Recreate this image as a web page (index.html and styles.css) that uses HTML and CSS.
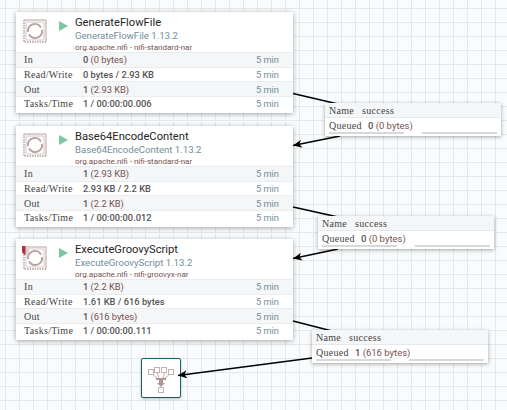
FILE: index.html
```html
<!DOCTYPE html>
<html lang="en">
<head>
    <meta charset="UTF-8" />
    <title>NiFi flow</title>
    <link rel="stylesheet" href="styles.css">
</head>
<body>
<div class="canvas">
    <div class="proc proc-1">
        <div class="proc-head">
            <svg class="proc-icon" width="24" height="24" viewBox="0 0 24 24">
                <path class="stamp" d="M1 1 H23 V23"/>
                <path class="stamp-dots" d="M1 1 V23 H23"/>
                <path class="stamp-inner" d="M3 3 H21 V21 H3 Z"/>
                <path class="swirl" d="M5 13 A7 7 0 0 1 18 8.500"/>
                <path class="swirl" d="M19 11 A7 7 0 0 1 6 15.500"/>
            </svg>
            <span class="run-icon"></span>
            <div class="proc-names">
                <div class="proc-name">GenerateFlowFile</div>
                <div class="proc-type">GenerateFlowFile 1.13.2</div>
                <div class="proc-bundle">org.apache.nifi - nifi-standard-nar</div>
            </div>
        </div>
        <div class="stat"><span class="stat-key">In</span><span class="stat-val"><b>0</b> (0 bytes)</span><span class="stat-age">5 min</span></div>
        <div class="stat"><span class="stat-key">Read/Write</span><span class="stat-val"><b>0 bytes / 2.93 KB</b></span><span class="stat-age">5 min</span></div>
        <div class="stat"><span class="stat-key">Out</span><span class="stat-val"><b>1</b> (2.93 KB)</span><span class="stat-age">5 min</span></div>
        <div class="stat"><span class="stat-key">Tasks/Time</span><span class="stat-val"><b>1 / 00:00:00.006</b></span><span class="stat-age">5 min</span></div>
    </div>

    <div class="proc proc-2">
        <div class="proc-head">
            <svg class="proc-icon" width="24" height="24" viewBox="0 0 24 24">
                <path class="stamp" d="M1 1 H23 V23"/>
                <path class="stamp-dots" d="M1 1 V23 H23"/>
                <path class="stamp-inner" d="M3 3 H21 V21 H3 Z"/>
                <path class="swirl" d="M5 13 A7 7 0 0 1 18 8.500"/>
                <path class="swirl" d="M19 11 A7 7 0 0 1 6 15.500"/>
            </svg>
            <span class="run-icon"></span>
            <div class="proc-names">
                <div class="proc-name">Base64EncodeContent</div>
                <div class="proc-type">Base64EncodeContent 1.13.2</div>
                <div class="proc-bundle">org.apache.nifi - nifi-standard-nar</div>
            </div>
        </div>
        <div class="stat"><span class="stat-key">In</span><span class="stat-val"><b>1</b> (2.93 KB)</span><span class="stat-age">5 min</span></div>
        <div class="stat"><span class="stat-key">Read/Write</span><span class="stat-val"><b>2.93 KB / 2.2 KB</b></span><span class="stat-age">5 min</span></div>
        <div class="stat"><span class="stat-key">Out</span><span class="stat-val"><b>1</b> (2.2 KB)</span><span class="stat-age">5 min</span></div>
        <div class="stat"><span class="stat-key">Tasks/Time</span><span class="stat-val"><b>1 / 00:00:00.012</b></span><span class="stat-age">5 min</span></div>
    </div>

    <div class="proc proc-3">
        <div class="proc-head">
            <svg class="proc-icon" width="24" height="24" viewBox="0 0 24 24">
                <path class="stamp" d="M1 1 H23 V23"/>
                <path class="stamp-dots" d="M1 1 V23 H23"/>
                <path class="stamp-inner" d="M3 3 H21 V21 H3 Z"/>
                <path class="swirl" d="M5 13 A7 7 0 0 1 18 8.500"/>
                <path class="swirl" d="M19 11 A7 7 0 0 1 6 15.500"/>
            </svg>
            <svg class="badge" width="7" height="9" viewBox="0 0 7 9">
                <path d="M0 0 H7 V5 Q7 7.500 3.500 9 Q0 7.500 0 5 Z" fill="#dccfcf"/>
                <path d="M0 0 H3.500 V9 Q0 7.500 0 5 Z" fill="#b0303f"/>
            </svg>
            <span class="run-icon"></span>
            <div class="proc-names">
                <div class="proc-name">ExecuteGroovyScript</div>
                <div class="proc-type">ExecuteGroovyScript 1.13.2</div>
                <div class="proc-bundle">org.apache.nifi - nifi-groovyx-nar</div>
            </div>
        </div>
        <div class="stat"><span class="stat-key">In</span><span class="stat-val"><b>1</b> (2.2 KB)</span><span class="stat-age">5 min</span></div>
        <div class="stat"><span class="stat-key">Read/Write</span><span class="stat-val"><b>1.61 KB / 616 bytes</b></span><span class="stat-age">5 min</span></div>
        <div class="stat"><span class="stat-key">Out</span><span class="stat-val"><b>1</b> (616 bytes)</span><span class="stat-age">5 min</span></div>
        <div class="stat"><span class="stat-key">Tasks/Time</span><span class="stat-val"><b>1 / 00:00:00.111</b></span><span class="stat-age">5 min</span></div>
    </div>

    <div class="funnel">
        <svg width="26" height="30" viewBox="0 0 26 30">
            <g fill="#fff" stroke="#c4b1b0">
                <rect x="0.500" y="6.500" width="5" height="5"/>
                <rect x="6.500" y="4.500" width="5" height="5"/>
                <rect x="13.500" y="4.500" width="5" height="5"/>
                <rect x="20.500" y="6.500" width="5" height="5"/>
                <rect x="10.500" y="24.500" width="5" height="5"/>
            </g>
            <path d="M4 11 L9 15 M9 9 L11 15 M17 9 L15 15 M22 11 L17 15" fill="none" stroke="#c4b1b0"/>
            <rect x="8" y="15" width="10" height="2" fill="#ad9897"/>
            <path d="M11 17 H15 V20 H17 L13 24 L9 20 H11 Z" fill="#ad9897"/>
        </svg>
    </div>

    <svg class="wires" width="507" height="410">
        <defs>
            <marker id="head" markerWidth="10" markerHeight="10" refX="9" refY="4" orient="auto" markerUnits="userSpaceOnUse">
                <path d="M0 0 L9 4 L0 8 L2.500 4 Z"/>
            </marker>
        </defs>
        <path d="M293 93.500 L338 104"/>
        <path d="M340 136 L293 145.500" marker-end="url(#head)"/>
        <path d="M293 207 L338 217"/>
        <path d="M338 249 L293 258.500" marker-end="url(#head)"/>
        <path d="M293 321 L332 331"/>
        <path d="M312 358 L178 375.500" marker-end="url(#head)"/>
    </svg>

    <div class="conn conn-1">
        <div class="conn-name"><span class="conn-key">Name</span><span class="conn-key">success</span></div>
        <div class="conn-queue"><span class="conn-key">Queued</span><span><b>0</b> (0 bytes)</span></div>
        <div class="conn-bars"><span></span><span></span></div>
    </div>
    <div class="conn conn-2">
        <div class="conn-name"><span class="conn-key">Name</span><span class="conn-key">success</span></div>
        <div class="conn-queue"><span class="conn-key">Queued</span><span><b>0</b> (0 bytes)</span></div>
        <div class="conn-bars"><span></span><span></span></div>
    </div>
    <div class="conn conn-3">
        <div class="conn-name"><span class="conn-key">Name</span><span class="conn-key">success</span></div>
        <div class="conn-queue"><span class="conn-key">Queued</span><span><b>1</b> (616 bytes)</span></div>
        <div class="conn-bars"><span></span><span></span></div>
    </div>
</div>
</body>
</html>
```

FILE: styles.css
```css
body {
    margin: 0;
    padding: 0;
    background-color: #f9fbfc;
    overflow: hidden;
}
.canvas {
    position: relative;
    width: 507px;
    height: 410px;
    overflow: hidden;
    background-color: #f9fbfc;
    background-image:
        linear-gradient(to right, #e3e9ec 1px, transparent 1px),
        linear-gradient(to bottom, #e3e9ec 1px, transparent 1px);
    background-size: 14px 14px;
    background-position: 5px 8px;
    font-family: Roboto, sans-serif;
    color: #775351;
}
.wires {
    position: absolute;
    left: 0;
    top: 0;
}
.wires > path {
    fill: none;
    stroke: #000;
    stroke-width: 1.500;
}
.wires marker path {
    fill: #000;
}

/* processors */
.proc {
    position: absolute;
    left: 16px;
    width: 277px;
    height: 101px;
    background: #fff;
    box-shadow: 0 1px 5px rgba(0, 0, 0, 0.35);
}
.proc-1 { top: 12px; }
.proc-2 { top: 126px; }
.proc-3 { top: 239px; }
.proc-head {
    position: relative;
    display: flex;
    height: 40px;
    padding: 7px 0 0 7px;
    box-sizing: border-box;
}
.proc-icon {
    flex: none;
    fill: none;
    stroke: #b5a1a0;
}
.stamp { stroke-width: 1; }
.stamp-dots {
    stroke-width: 1.500;
    stroke-dasharray: 1.500 1;
}
.stamp-inner { stroke: #d4c8c7; }
.swirl { stroke-width: 2; }
.badge {
    position: absolute;
    left: 6px;
    top: 7px;
}
.run-icon {
    flex: none;
    width: 0;
    height: 0;
    margin: 2px 7px 0 12px;
    border-left: 9px solid #7dc7a0;
    border-top: 5px solid transparent;
    border-bottom: 5px solid transparent;
}
.proc-names {
    min-width: 0;
    margin-top: -3px;
}
.proc-name {
    font-size: 11.200px;
    line-height: 14px;
    color: #262626;
}
.proc-type {
    font-size: 9.600px;
    line-height: 12px;
    color: #728e9b;
}
.proc-bundle {
    font-size: 8px;
    line-height: 11px;
    margin-top: 0;
    color: #775351;
}
.stat {
    display: flex;
    align-items: center;
    height: 14.700px;
    padding: 0 14px 0 8px;
    font-size: 9.300px;
    border-top: 1px solid #e9edef;
    box-sizing: border-box;
}
.stat:nth-child(even) {
    background: #f4f6f7;
}
.stat-key {
    width: 59px;
    flex: none;
    font-family: "Liberation Serif", serif;
    font-size: 10px;
    letter-spacing: 0.300px;
    color: #444;
}
.stat-val {
    flex: 1;
    color: #775351;
}
.stat-val b {
    font-weight: 500;
    color: #555;
}
.stat-age {
    color: #728e9b;
}

/* connection labels */
.conn {
    position: absolute;
    width: 176px;
    height: 33px;
    background: #fff;
    box-shadow: 0 1px 4px rgba(0, 0, 0, 0.35);
}
.conn-1 { left: 325px; top: 103px; }
.conn-2 { left: 318px; top: 216px; }
.conn-3 { left: 312px; top: 330px; }
.conn-name {
    display: flex;
    gap: 8px;
    align-items: center;
    height: 15px;
    padding: 0 4px;
    background: #f4f6f7;
    border-bottom: 1px solid #e3e9ec;
    box-sizing: border-box;
}
.conn-key {
    font-family: "Liberation Serif", serif;
    font-size: 10px;
    letter-spacing: 0.300px;
    color: #444;
}
.conn-queue {
    display: flex;
    gap: 6px;
    align-items: center;
    height: 14px;
    padding: 0 4px;
    font-size: 9.500px;
    color: #775351;
}
.conn-queue b {
    font-weight: 500;
    color: #555;
}
.conn-bars {
    display: flex;
    justify-content: space-between;
    padding: 0 4px;
}
.conn-bars span {
    display: block;
    width: 75px;
    height: 2px;
    background: #d8d8d8;
}

.funnel {
    position: absolute;
    left: 141px;
    top: 358px;
    width: 40px;
    height: 40px;
    box-sizing: border-box;
    display: flex;
    align-items: center;
    justify-content: center;
    background: #fff;
    border: 1px solid #1d5f5f;
    border-radius: 2px;
    box-shadow: 0 1px 3px rgba(0, 0, 0, 0.25);
}
```
